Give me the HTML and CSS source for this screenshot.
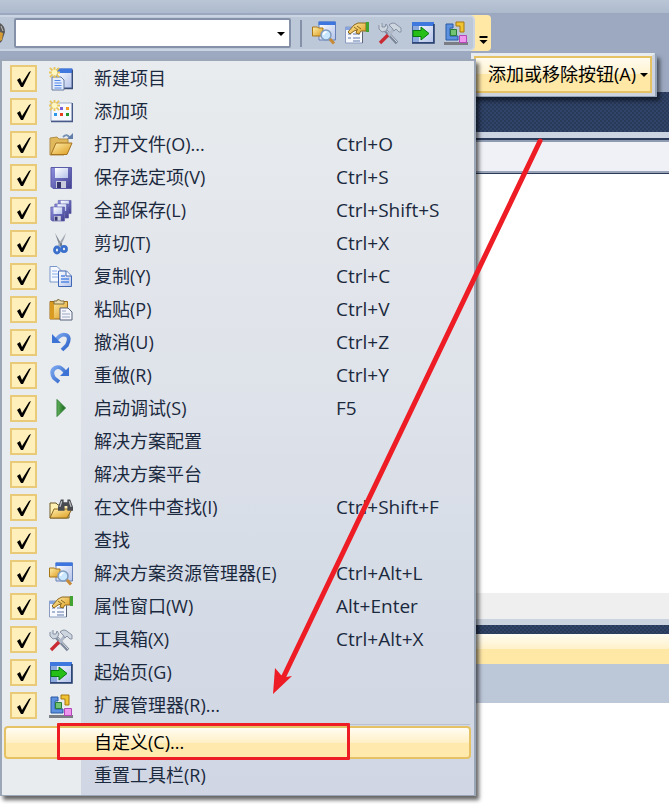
FILE: index.html
```html
<!DOCTYPE html>
<html lang="zh-CN">
	<head>
		<meta charset="UTF-8">
		<title>自定义工具栏</title>
		<link rel="stylesheet" href="styles.css">
	</head>

	<body>
		<!-- 图标 -->
		<svg class="sprite" aria-hidden="true">
			<defs>
				<linearGradient id="gWin" x1="0" y1="0" x2="1" y2="1"><stop offset="0" stop-color="#fff"/><stop offset="1" stop-color="#b4c3ea"/></linearGradient>
				<linearGradient id="gFolder" x1="0" y1="0" x2="1" y2="1"><stop offset="0" stop-color="#fff0ae"/><stop offset="1" stop-color="#dd9b1c"/></linearGradient>
				<linearGradient id="gDisk" x1="0" y1="0" x2="1" y2="1"><stop offset="0" stop-color="#8f92e0"/><stop offset="1" stop-color="#40408f"/></linearGradient>
				<linearGradient id="gBlue" x1="0" y1="0" x2="1" y2="1"><stop offset="0" stop-color="#7aa7ee"/><stop offset="1" stop-color="#2d62c8"/></linearGradient>
				<linearGradient id="gGreen" x1="0" y1="0" x2="1" y2="0"><stop offset="0" stop-color="#65b45e"/><stop offset="1" stop-color="#116315"/></linearGradient>
			</defs>
			<symbol id="star" viewBox="0 0 12 12">
				<path d="M6 0v12M0 6h12M1 1l10 10M11 1L1 11" stroke="#e9c557" stroke-width="2"/>
				<circle cx="6" cy="6" r="3" fill="#fff7c2"/>
			</symbol>
			<symbol id="new-project" viewBox="0 0 24 24">
				<path d="M8 2h15v19H8z" fill="url(#gWin)" stroke="#6a82b4"/>
				<path d="M8 1.500h15.500V6H8z" fill="#4078e0"/>
				<path d="M23.500 3v18.500H13" fill="none" stroke="#3a4d77" stroke-width="1.400"/>
				<path d="M3 10h9l3 3v10H3z" fill="#e4edff" stroke="#657b9d"/>
				<path d="M5.500 13.500h6M5.500 16h7M5.500 18.500h7M5.500 21h7" stroke="#5288e5"/>
				<use href="#star" width="11" height="11"/>
			</symbol>
			<symbol id="add-item" viewBox="0 0 24 24">
				<path d="M2 3h21v18H2z" fill="#f5f8ff" stroke="#a0afcb"/>
				<path d="M2 21.500h21.500V3" fill="none" stroke="#4a5a88" stroke-width="1.500"/>
				<path d="M11 7h3v3h-3z" fill="#7560d8"/><path d="M17 7h3v3h-3z" fill="#f69a22"/>
				<path d="M5 13h3v3H5z" fill="#2b99e8"/><path d="M11 13h3v3h-3z" fill="#e83d1f"/><path d="M17 13h3v3h-3z" fill="#20962b"/>
				<use href="#star" width="11" height="11"/>
			</symbol>
			<symbol id="open" viewBox="0 0 24 24">
				<path d="M1 5l7-1 2 2h9v5l-4 11H1z" fill="#e0b95c" stroke="#b08f4d"/>
				<path d="M7 10h16l-5 11.500H2z" fill="url(#gFolder)" stroke="#a47220"/>
				<path d="M14 4q4-4 7 1" fill="none" stroke="#7690b3" stroke-width="1.800"/><path d="M18 6h6V0z" fill="#607ea9"/>
			</symbol>
			<symbol id="save" viewBox="0 0 24 24">
				<path d="M2 1.500h20.500v21H4l-2-2z" fill="url(#gDisk)" stroke="#5c5ba8"/>
				<path d="M6 2h13v10H6z" fill="url(#gWin)"/>
				<path d="M7 15h10v7H7z" fill="#c8cbdc"/><path d="M8 16h4v6H8z" fill="#35356d"/>
			</symbol>
			<symbol id="save-all" viewBox="0 0 24 24">
				<use href="#save" x="8" y="0" width="15" height="16"/>
				<use href="#save" x="4.500" y="3.500" width="16" height="17"/>
				<use href="#save" x="0" y="7" width="17" height="16"/>
			</symbol>
			<symbol id="cut" viewBox="0 0 24 24">
				<path d="M6 1l2 6 3 8 2-2z" fill="#858c97"/><path d="M17 1l-2 6-4 8-2-2z" fill="#a0a7b2"/>
				<path d="M12 11v3" stroke="#4b5566"/>
				<ellipse cx="8" cy="18" rx="2.500" ry="3" fill="none" stroke="#3b70cc" stroke-width="2.800"/>
				<ellipse cx="15" cy="17" rx="2.500" ry="2.700" fill="none" stroke="#3b70cc" stroke-width="2.800"/>
			</symbol>
			<symbol id="copy" viewBox="0 0 24 24">
				<path d="M1 1.500h7l4 4V17H1z" fill="#f5f9ff" stroke="#7897ca"/>
				<path d="M3 6h5M3 9h6M3 12h6" stroke="#8daeea"/>
				<path d="M9.500 6h8l5 5v10.500h-13z" fill="url(#gWin)" stroke="#3f67b5"/>
				<path d="M17 6v5h5" fill="#fff" stroke="#3f67b5"/>
				<path d="M12 11h4M12 14h8M12 17h8" stroke="#5286e2" stroke-width="1.300"/>
			</symbol>
			<symbol id="paste" viewBox="0 0 24 24">
				<path d="M1 3.500h17.500V21H1z" fill="url(#gFolder)" stroke="#9c6b16"/>
				<path d="M1 4h4v17H1z" fill="#d89a20"/>
				<path d="M5 6V3h3q0-3 4 0h3v3z" fill="#e8dcae" stroke="#806b39"/>
				<path d="M11 10h8l4 4v8H11z" fill="#f4f6fb" stroke="#56617a"/>
				<path d="M13 13h4M13 16h8M13 19h8" stroke="#9aa7c2"/>
			</symbol>
			<symbol id="undo" viewBox="0 0 24 24">
				<path d="M7 9Q12 2 17 4t1 10l-5 5" fill="none" stroke="url(#gBlue)" stroke-width="3.800"/>
				<path d="M3 3l9 9H3z" fill="#3c73d5"/>
			</symbol>
			<symbol id="redo" viewBox="0 0 24 24">
				<path d="M16 8Q11 1 6 4t-1 10l5 4" fill="none" stroke="url(#gBlue)" stroke-width="3.800"/>
				<path d="M20 3v9h-9z" fill="#3c73d5"/>
			</symbol>
			<symbol id="run" viewBox="0 0 24 24">
				<path d="M8 2.500L16.500 11 8 19.500z" fill="url(#gGreen)" stroke="#34813a"/>
			</symbol>
			<symbol id="binoculars" viewBox="0 0 16 14">
				<path d="M3 1h3v3h4V1h3l3 8v4h-6V8H7v5H0V9z" fill="#484a50"/>
				<path d="M4 3L2 9M12 3l2 6" stroke="#b8bbc1" stroke-width="1.400"/>
			</symbol>
			<symbol id="find-files" viewBox="0 0 24 24">
				<path d="M1 7h6l2 2h11v13H1z" fill="#fff0b2" stroke="#6e5829"/>
				<path d="M5 13h18l-5 9H1z" fill="url(#gFolder)" stroke="#8d671f"/>
				<use href="#binoculars" x="9" y="2" width="15" height="14"/>
			</symbol>
			<symbol id="solution" viewBox="0 0 24 24">
				<path d="M7 1h16.500v18H7z" fill="url(#gWin)" stroke="#6680b8"/>
				<path d="M6.500.5h17V4h-17z" fill="#3d76df"/>
				<path d="M.5 6h5l1 1H11v8H.5z" fill="url(#gFolder)" stroke="#a97616"/>
				<path d="M17 17l5 5.500" stroke="#c78a35" stroke-width="3"/>
				<circle cx="14" cy="14" r="5" fill="#c9e7ff" stroke="#7f9bbd" stroke-width="1.500"/>
				<path d="M11.500 14q0-3 3-3" stroke="#fff" stroke-width="1.500" fill="none"/>
			</symbol>
			<symbol id="properties" viewBox="0 0 24 24">
				<path d="M.5 6h17v16H.5z" fill="#f7f9ff" stroke="#8b9cc0"/>
				<path d="M.5 6h17v3H.5z" fill="#86a4df"/>
				<path d="M3 13h3M3 17h3M8 13h7M8 17h7M8 20h7" stroke="#93a3c5" stroke-width="1.500"/>
				<path d="M17.500 22V11" stroke="#5c6374"/>
				<path d="M3 11l6-7 4-2h8v8h-5l-2 3-3-1 1-3-3 1-4 3z" fill="url(#gFolder)" stroke="#8d691d"/>
				<path d="M12 5l4 3M9 6l4 3" stroke="#8d691d"/>
				<path d="M21 1h3v10h-3z" fill="#42a332"/>
			</symbol>
			<symbol id="tools" viewBox="0 0 24 24">
				<path d="M6 8l13 14" stroke="#7b8798" stroke-width="3.400"/><path d="M6 7l13 14" stroke="#d9dfe8"/>
				<path d="M4 2v4h3l1-3 2 3-2 4-4 1-3-3V4" fill="#cdd5df" stroke="#8792a5"/>
				<path d="M16 8L9 16" stroke="#aeb8c7" stroke-width="3"/>
				<path d="M10 14l-8 8" stroke="#c92b35" stroke-width="3.400"/>
				<path d="M11 4q4-4 8 0l4 3v4h-2l-3-3-2 2-2-3z" fill="#cdd5df" stroke="#8792a5"/>
			</symbol>
			<symbol id="start" viewBox="0 0 24 24">
				<path d="M1.500 1.500h21v20h-21z" fill="url(#gWin)" stroke="#41649f"/>
				<path d="M1 1h22v4H1z" fill="#3e78df"/><path d="M2 5h6v16H2z" fill="#8ba9dd"/>
				<path d="M23 3v19H1" fill="none" stroke="#263d6b" stroke-width="1.500"/>
				<path d="M2 9.500h8V6l8 6.500-8 6.500v-3.500H2z" fill="#25bf18" stroke="#087a10"/>
			</symbol>
			<symbol id="extension" viewBox="0 0 24 24">
				<path d="M0 21h24v3H0z" fill="#7b7d85"/>
				<path d="M2 3h7v4H6v8h8v4H2z" fill="#5b91de" stroke="#2c5ba5"/>
				<path d="M12 1h8v10h-4V5h-4z" fill="#efc331" stroke="#a87910"/>
				<path d="M6.500 8.500h6v6h-6z" fill="#72c372" stroke="#287d38"/>
				<path d="M15.500 14.500h7v7h-7z" fill="#ee95ee" stroke="#b447b7"/>
			</symbol>
		</svg>

		<div class="menubar"></div>
		<header class="toolbar">
			<div class="tools">
				<svg class="edge" viewBox="0 0 5 20"><path d="M0 0q5 3 5 9l-3 9-2 2z" fill="#5b5a58"/><path d="M0 9l3 1-1 7-2 1z" fill="#d89c35"/><path d="M1 3l2 5" stroke="#b8bbc1"/></svg>
				<div class="combo">
					<select aria-label="查找"><option></option></select>
					<svg class="caret" viewBox="0 0 8 4"><path d="M0 0h8L4 4z"/></svg>
				</div>
				<span class="divider"></span>
				<button class="tool" aria-label="解决方案资源管理器"><svg class="icon"><use href="#solution"/></svg></button>
				<button class="tool" aria-label="属性窗口"><svg class="icon"><use href="#properties"/></svg></button>
				<button class="tool" aria-label="工具箱"><svg class="icon"><use href="#tools"/></svg></button>
				<button class="tool" aria-label="起始页"><svg class="icon"><use href="#start"/></svg></button>
				<button class="tool" aria-label="扩展管理器"><svg class="icon"><use href="#extension"/></svg></button>
			</div>
			<button class="overflow" aria-label="工具栏选项"><svg viewBox="0 0 8 8"><path d="M0 0h8v2H0zM0 4h8L4 8z"/></svg></button>

			<button class="add-remove"><span>添加或移除按钮(A)</span><svg class="caret" viewBox="0 0 8 4"><path d="M0 0h8L4 4z"/></svg></button>

			<div class="menu">
				<label class="item"><input type="checkbox" checked><svg class="icon"><use href="#new-project"/></svg><span>新建项目</span></label>
				<label class="item"><input type="checkbox" checked><svg class="icon"><use href="#add-item"/></svg><span>添加项</span></label>
				<label class="item"><input type="checkbox" checked><svg class="icon"><use href="#open"/></svg><span>打开文件(O)...</span><kbd>Ctrl+O</kbd></label>
				<label class="item"><input type="checkbox" checked><svg class="icon"><use href="#save"/></svg><span>保存选定项(V)</span><kbd>Ctrl+S</kbd></label>
				<label class="item"><input type="checkbox" checked><svg class="icon"><use href="#save-all"/></svg><span>全部保存(L)</span><kbd>Ctrl+Shift+S</kbd></label>
				<label class="item"><input type="checkbox" checked><svg class="icon"><use href="#cut"/></svg><span>剪切(T)</span><kbd>Ctrl+X</kbd></label>
				<label class="item"><input type="checkbox" checked><svg class="icon"><use href="#copy"/></svg><span>复制(Y)</span><kbd>Ctrl+C</kbd></label>
				<label class="item"><input type="checkbox" checked><svg class="icon"><use href="#paste"/></svg><span>粘贴(P)</span><kbd>Ctrl+V</kbd></label>
				<label class="item"><input type="checkbox" checked><svg class="icon"><use href="#undo"/></svg><span>撤消(U)</span><kbd>Ctrl+Z</kbd></label>
				<label class="item"><input type="checkbox" checked><svg class="icon"><use href="#redo"/></svg><span>重做(R)</span><kbd>Ctrl+Y</kbd></label>
				<label class="item"><input type="checkbox" checked><svg class="icon"><use href="#run"/></svg><span>启动调试(S)</span><kbd>F5</kbd></label>
				<label class="item"><input type="checkbox" checked><i></i><span>解决方案配置</span></label>
				<label class="item"><input type="checkbox" checked><i></i><span>解决方案平台</span></label>
				<label class="item"><input type="checkbox" checked><svg class="icon"><use href="#find-files"/></svg><span>在文件中查找(I)</span><kbd>Ctrl+Shift+F</kbd></label>
				<label class="item"><input type="checkbox" checked><i></i><span>查找</span></label>
				<label class="item"><input type="checkbox" checked><svg class="icon"><use href="#solution"/></svg><span>解决方案资源管理器(E)</span><kbd>Ctrl+Alt+L</kbd></label>
				<label class="item"><input type="checkbox" checked><svg class="icon"><use href="#properties"/></svg><span>属性窗口(W)</span><kbd>Alt+Enter</kbd></label>
				<label class="item"><input type="checkbox" checked><svg class="icon"><use href="#tools"/></svg><span>工具箱(X)</span><kbd>Ctrl+Alt+X</kbd></label>
				<label class="item"><input type="checkbox" checked><svg class="icon"><use href="#start"/></svg><span>起始页(G)</span></label>
				<label class="item"><input type="checkbox" checked><svg class="icon"><use href="#extension"/></svg><span>扩展管理器(R)...</span></label>
				<hr>
				<button class="command active">自定义(C)...</button>
				<button class="command">重置工具栏(R)</button>
			</div>
		</header>

		<!-- 菜单后面的窗口 -->
		<main>
			<div class="dots top"></div>
			<div class="frame"></div>
			<div class="tab-strip"></div>
			<div class="editor"></div>
			<div class="scrollbar"></div>
			<div class="frame-bottom"></div>
			<div class="dots gap"></div>
			<div class="panel-title"></div>
			<div class="panel-bar"></div>
		</main>

		<!-- 红色标注 -->
		<div class="mark-box"></div>
		<svg class="mark-arrow" viewBox="0 0 272 560">
			<path d="M268 5L11 542" stroke="#ee1c24" stroke-width="5" stroke-linecap="round"/>
			<path d="M1 558l2-26 6 7 5 2 6-1z" fill="#ee1c24"/>
		</svg>
	</body>
</html>
```

FILE: styles.css
```css
* {
	box-sizing: border-box;
}

body {
	margin: 0;
	position: relative;
	background: #fff;
	color: #1b293e;
	font: 18px/33px "Open Sans", "Noto Sans CJK SC", sans-serif;
}

button,
select,
kbd {
	font: inherit;
	color: inherit;
}

button {
	margin: 0;
	padding: 0;
	border: none;
	background: none;
}

.sprite {
	position: absolute;
	width: 0;
	height: 0;
}

.icon {
	display: block;
	width: 24px;
	height: 24px;
}

.caret {
	width: 8px;
	height: 4px;
}

/*------ 工具栏 ------*/
.menubar {
	height: 15px;
	background: linear-gradient(#bac6d6, #adbacd);
	border-bottom: 2px solid #9ba8c0;
}

.toolbar {
	position: relative;
	display: flex;
	height: 77px;
	align-items: flex-start;
	background: #9ca9c0;
}

.tools {
	display: flex;
	align-items: center;
	height: 36px;
	padding-right: 5px;
	background: #bcc7d8;
	border: 2px solid #cbd4e2;
	border-left: none;
	border-radius: 0 5px 5px 0;
	box-shadow: 4px 0 0 #ffe8a6;
}

.edge {
	width: 5px;
	height: 20px;
	margin-right: 9px;
}

.combo {
	position: relative;
	display: flex;
}

.combo select {
	appearance: none;
	width: 277px;
	height: 30px;
	border: 2px solid #8591a8;
	border-radius: 2px;
	background: #fff;
}

.combo .caret {
	position: absolute;
	right: 6px;
	top: 14px;
}

.divider {
	width: 2px;
	height: 27px;
	margin: 0 10px 0 9px;
	background: #8591a8;
}

.tool + .tool {
	margin-left: 9px;
}

.overflow {
	display: flex;
	align-items: flex-end;
	justify-content: center;
	width: 16px;
	height: 36px;
	padding-bottom: 7px;
	background: #ffe8a6;
	border-radius: 0 4px 4px 0;
}

.overflow svg {
	width: 9px;
	height: 8px;
}

.add-remove {
	position: absolute;
	left: 471px;
	top: 38px;
	display: flex;
	align-items: center;
	gap: 4px;
	height: 43px;
	padding: 0 4px 0 14px;
	border: 3px solid #e9ecee;
	border-right-color: #cdd4df;
	border-bottom-color: #cdd4df;
	background: linear-gradient(#fffcf2, #fff3cf 50%, #ffe8a6 50%);
	box-shadow: inset 0 0 0 2px #e5c365, 2px 1px 0 #94a2b8, 5px 5px 4px rgba(0, 0, 0, .5);
	color: #000;
	z-index: 1;
}

/*------ 下拉菜单 ------*/
.menu {
	position: absolute;
	left: 0;
	top: 44px;
	width: 476px;
	padding: 1px 0 3px;
	border: 2px solid #9ba7b7;
	border-bottom-width: 1px;
	background: linear-gradient(90deg, #e9ecee 79px, transparent 79px), linear-gradient(#e9ecee, #dde1e9 50%, #d5dce6 70%, #d0d6e3);
	box-shadow: 3px 4px 4px rgba(0, 0, 0, .6);
	z-index: 2;
}

.item {
	display: grid;
	grid-template-columns: 27px 24px 242px 1fr;
	align-items: center;
	height: 33px;
	padding-left: 8px;
}

.item .icon,
.item i {
	margin-left: 12px;
}

.item span,
.item kbd {
	margin-left: 33px;
}

.item kbd {
	font-size: 19px;
}

.item input {
	appearance: none;
	width: 27px;
	height: 27px;
	margin: 0;
	border: 2px solid #e8ca78;
	background: #ffefbb;
}

.item input:checked::before {
	content: "";
	display: block;
	width: 23px;
	height: 23px;
	background: #000;
	clip-path: polygon(5px 13px, 8px 11px, 10px 16px, 17px 5px, 19px 4px, 11px 20px, 9px 20px);
}

.menu hr {
	margin: 2px 4px 1px 79px;
	border: none;
	border-top: 1px solid #b9c1ce;
}

.command {
	display: block;
	width: calc(100% - 5px);
	height: 33px;
	margin-left: 2px;
	padding-left: 88px;
	line-height: 29px;
	text-align: left;
	border: 2px solid transparent;
	border-radius: 4px;
}

.command.active {
	border-color: #e5c365;
	background: linear-gradient(#fffcf2, #fff0c7 50%, #ffe9ad 50%);
	color: #000;
}

/*------ 背景窗口 ------*/
.dots {
	background: radial-gradient(circle at 1px 1px, #293a58 1px, transparent 1px) 0 0 / 4px 4px, radial-gradient(circle at 1px 1px, #293a58 1px, transparent 1px) 2px 2px / 4px 4px, #31446a;
}

.dots.top {
	height: 40px;
}

.dots.gap {
	height: 9px;
}

.frame {
	height: 8px;
	background: #ccd3e1;
	border-bottom: 2px solid #2b3b59;
}

.tab-strip {
	height: 33px;
	background: #f0f1f7;
	border-top: 2px solid #8e9bb0;
	border-bottom: 2px solid #9ba5ba;
}

.editor {
	height: 420px;
	border-top: 1px solid #2b3b59;
}

.scrollbar {
	height: 26px;
	background: #efefef;
}

.frame-bottom {
	height: 6px;
	background: #ccd4e0;
}

.panel-title {
	height: 30px;
	background: linear-gradient(#fffcf2, #fff1c9 50%, #ffe8a6 50%);
}

.panel-bar {
	height: 39px;
	margin-bottom: 101px;
	background: #bcc7d8;
}

/*------ 标注 ------*/
.mark-box {
	position: absolute;
	left: 57px;
	top: 723px;
	width: 293px;
	height: 37px;
	border: 3px solid #ee1c24;
	border-radius: 1px;
	z-index: 3;
}

.mark-arrow {
	position: absolute;
	left: 272px;
	top: 136px;
	width: 272px;
	height: 560px;
	z-index: 3;
}
```
